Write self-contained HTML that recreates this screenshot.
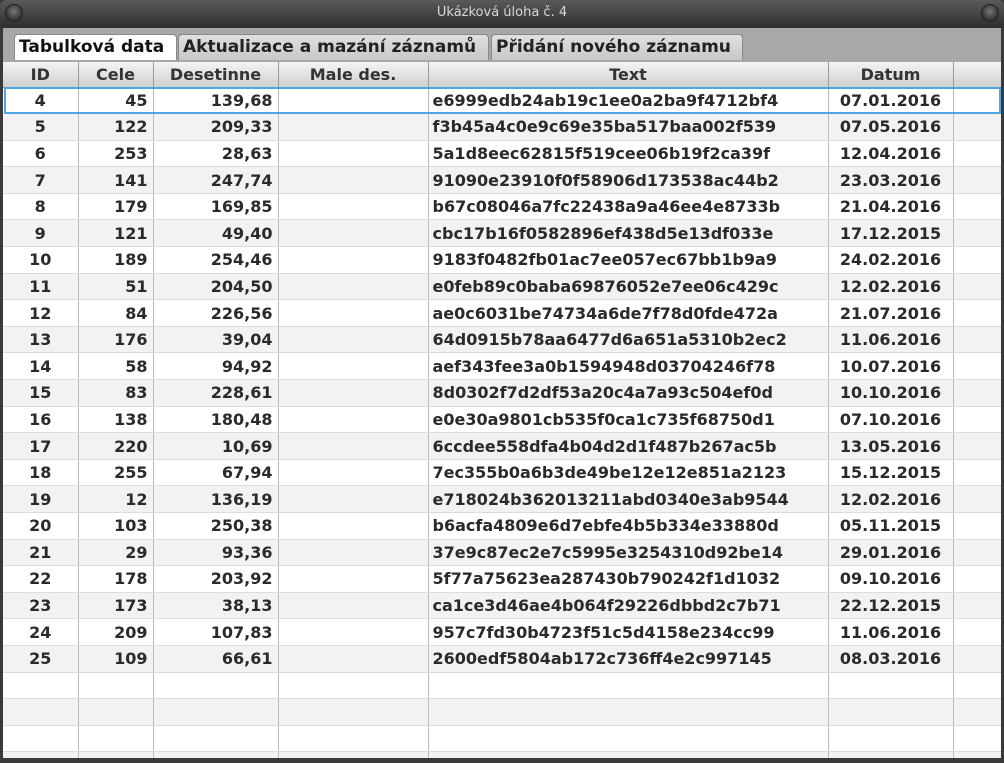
<!DOCTYPE html>
<html><head><meta charset="utf-8"><style>
*{margin:0;padding:0;box-sizing:border-box}
body{width:1004px;height:763px;overflow:hidden;background:#3a3a3a;font-family:"DejaVu Sans","Liberation Sans",sans-serif;position:relative}
.title{position:absolute;left:0;top:0;width:1004px;height:28px;background:linear-gradient(#5a5a5a,#2e2e2e);color:#d8d8d8;font-size:13px;text-align:center;line-height:26px;border-radius:6px 6px 0 0}
.dot{position:absolute;top:4px;width:18px;height:18px;border-radius:50%;background:radial-gradient(circle at 50% 40%,#777,#333 70%);border:1px solid #222}
.bodyw{position:absolute;left:3px;top:28px;width:998px;height:730px;background:#a8a8a8}
.tab{position:absolute;top:6px;height:26px;background:linear-gradient(#e0e0e0,#c8c8c8);border:1px solid #888;border-bottom:none;border-radius:4px 4px 0 0;font-weight:bold;font-size:17px;line-height:24px;padding-left:4px;color:#222;white-space:nowrap}
.tab.act{background:#fff;color:#111}
.tbl{position:absolute;left:3px;top:62px;width:998px;height:696px;background:#fff;overflow:hidden}
table{border-collapse:collapse;table-layout:fixed;width:998px;position:absolute;left:0;top:0}
th{height:25px;background:linear-gradient(#f4f4f4,#cfcfcf);border-right:1px solid #999;border-bottom:1px solid #999;font-weight:bold;font-size:16px;color:#333;text-align:center;padding:0}
td{height:26.6px;border-right:1px solid #bbb;border-bottom:1px solid #ddd;font-weight:bold;font-size:16px;color:#2a2a2a;white-space:nowrap;overflow:hidden;padding:0}
tr:nth-child(even) td{background:#f2f2f2}
td:nth-child(1){text-align:center}
td:nth-child(2),td:nth-child(3){text-align:right;padding-right:5px}
td:nth-child(5){padding-left:4px}
td:nth-child(6){text-align:center}
.sel{position:absolute;left:1px;top:25px;width:997px;height:27px;border:2px solid #4fa6e6}
</style></head><body>
<div class="title">Ukázková úloha č. 4</div>
<div class="dot" style="left:5px"></div><div class="dot" style="left:981px"></div>
<div class="bodyw">
<div class="tab act" style="left:11px;width:163px">Tabulková data</div>
<div class="tab" style="left:175px;width:311px">Aktualizace a mazání záznamů</div>
<div class="tab" style="left:488px;width:252px">Přidání nového záznamu</div>
</div>
<div class="tbl">
<table>
<colgroup><col style="width:75px"><col style="width:75px"><col style="width:125px"><col style="width:150px"><col style="width:400px"><col style="width:125px"><col style="width:48px"></colgroup>
<thead><tr><th>ID</th><th>Cele</th><th>Desetinne</th><th>Male des.</th><th>Text</th><th>Datum</th><th></th></tr></thead>
<tbody>
<tr><td>4</td><td>45</td><td>139,68</td><td></td><td>e6999edb24ab19c1ee0a2ba9f4712bf4</td><td>07.01.2016</td><td></td></tr>
<tr><td>5</td><td>122</td><td>209,33</td><td></td><td>f3b45a4c0e9c69e35ba517baa002f539</td><td>07.05.2016</td><td></td></tr>
<tr><td>6</td><td>253</td><td>28,63</td><td></td><td>5a1d8eec62815f519cee06b19f2ca39f</td><td>12.04.2016</td><td></td></tr>
<tr><td>7</td><td>141</td><td>247,74</td><td></td><td>91090e23910f0f58906d173538ac44b2</td><td>23.03.2016</td><td></td></tr>
<tr><td>8</td><td>179</td><td>169,85</td><td></td><td>b67c08046a7fc22438a9a46ee4e8733b</td><td>21.04.2016</td><td></td></tr>
<tr><td>9</td><td>121</td><td>49,40</td><td></td><td>cbc17b16f0582896ef438d5e13df033e</td><td>17.12.2015</td><td></td></tr>
<tr><td>10</td><td>189</td><td>254,46</td><td></td><td>9183f0482fb01ac7ee057ec67bb1b9a9</td><td>24.02.2016</td><td></td></tr>
<tr><td>11</td><td>51</td><td>204,50</td><td></td><td>e0feb89c0baba69876052e7ee06c429c</td><td>12.02.2016</td><td></td></tr>
<tr><td>12</td><td>84</td><td>226,56</td><td></td><td>ae0c6031be74734a6de7f78d0fde472a</td><td>21.07.2016</td><td></td></tr>
<tr><td>13</td><td>176</td><td>39,04</td><td></td><td>64d0915b78aa6477d6a651a5310b2ec2</td><td>11.06.2016</td><td></td></tr>
<tr><td>14</td><td>58</td><td>94,92</td><td></td><td>aef343fee3a0b1594948d03704246f78</td><td>10.07.2016</td><td></td></tr>
<tr><td>15</td><td>83</td><td>228,61</td><td></td><td>8d0302f7d2df53a20c4a7a93c504ef0d</td><td>10.10.2016</td><td></td></tr>
<tr><td>16</td><td>138</td><td>180,48</td><td></td><td>e0e30a9801cb535f0ca1c735f68750d1</td><td>07.10.2016</td><td></td></tr>
<tr><td>17</td><td>220</td><td>10,69</td><td></td><td>6ccdee558dfa4b04d2d1f487b267ac5b</td><td>13.05.2016</td><td></td></tr>
<tr><td>18</td><td>255</td><td>67,94</td><td></td><td>7ec355b0a6b3de49be12e12e851a2123</td><td>15.12.2015</td><td></td></tr>
<tr><td>19</td><td>12</td><td>136,19</td><td></td><td>e718024b362013211abd0340e3ab9544</td><td>12.02.2016</td><td></td></tr>
<tr><td>20</td><td>103</td><td>250,38</td><td></td><td>b6acfa4809e6d7ebfe4b5b334e33880d</td><td>05.11.2015</td><td></td></tr>
<tr><td>21</td><td>29</td><td>93,36</td><td></td><td>37e9c87ec2e7c5995e3254310d92be14</td><td>29.01.2016</td><td></td></tr>
<tr><td>22</td><td>178</td><td>203,92</td><td></td><td>5f77a75623ea287430b790242f1d1032</td><td>09.10.2016</td><td></td></tr>
<tr><td>23</td><td>173</td><td>38,13</td><td></td><td>ca1ce3d46ae4b064f29226dbbd2c7b71</td><td>22.12.2015</td><td></td></tr>
<tr><td>24</td><td>209</td><td>107,83</td><td></td><td>957c7fd30b4723f51c5d4158e234cc99</td><td>11.06.2016</td><td></td></tr>
<tr><td>25</td><td>109</td><td>66,61</td><td></td><td>2600edf5804ab172c736ff4e2c997145</td><td>08.03.2016</td><td></td></tr>
<tr><td></td><td></td><td></td><td></td><td></td><td></td><td></td></tr>
<tr><td></td><td></td><td></td><td></td><td></td><td></td><td></td></tr>
<tr><td></td><td></td><td></td><td></td><td></td><td></td><td></td></tr>
<tr><td></td><td></td><td></td><td></td><td></td><td></td><td></td></tr>
</tbody></table>
<div class="sel"></div>
</div>
</body></html>
